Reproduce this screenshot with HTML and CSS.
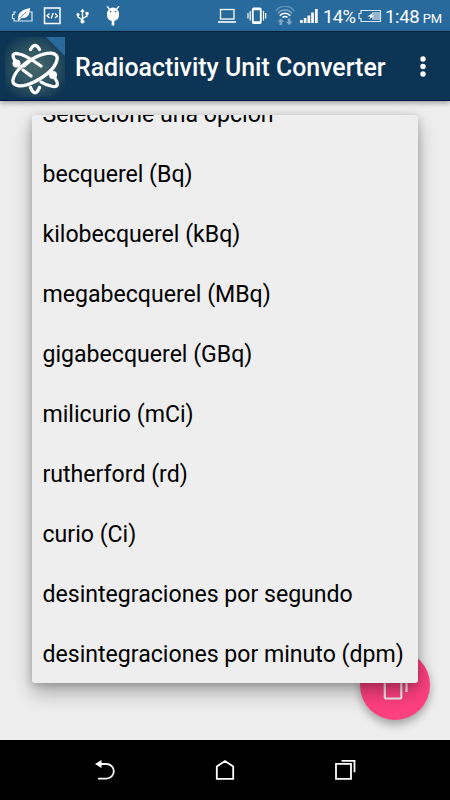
FILE: index.html
```html
<!DOCTYPE html>
<html lang="es">
<head>
    <meta charset="UTF-8">
    <title>Radioactivity Unit Converter</title>
    <link rel="stylesheet" href="styles.css">
</head>
<body>
    <div class="screen">
        <div class="status-bar">
            <div class="notifications">
                <svg width="22" height="20" viewBox="0 0 22 20">
                    <path d="M5 6H3v2.500H1.500v4H3v2.500h18V6H19" fill="none" stroke="#dbe7ef" stroke-width="1.2"/>
                    <path d="M7 13C7 6 11 4 19 2c0 6-2 10.500-8 10l-4 3z" fill="#fff"/>
                    <path d="M9 12l6-6" stroke="#286a9c" stroke-width=".7"/>
                </svg>
                <svg width="18" height="20" viewBox="0 0 18 20">
                    <rect x="1.500" y="2" width="15.500" height="15.500" fill="none" stroke="#fff" stroke-width="1.5"/>
                    <path d="M6.500 7.500L4 9.700 6.500 12M12 7.500l2.500 2.200L12 12M10.200 7l-2 5.500" fill="none" stroke="#fff" stroke-width="1.3"/>
                </svg>
                <svg width="14" height="20" viewBox="0 0 14 20">
                    <path d="M7.500 15V5M7.500 14L3 11V8.500M7.500 12.500L12 10V7.500" fill="none" stroke="#fff" stroke-width="1.4"/>
                    <path d="M5.200 6l2.300-3.500L9.800 6z" fill="#fff"/>
                    <circle cx="7.500" cy="15.500" r="2" fill="#fff"/>
                    <circle cx="3" cy="8.500" r="1.500" fill="#fff"/>
                    <path d="M10.500 6h3v3h-3z" fill="#fff"/>
                </svg>
                <svg width="15" height="22" viewBox="0 0 15 22">
                    <path d="M2 0l3 4M14 0l-3 4" stroke="#fff" stroke-width="1.3"/>
                    <path d="M2 8a6 6.500 0 0 1 12 0v1.500a6 5.500 0 0 1-12 0z" fill="#fff"/>
                    <path d="M8 14v5.500" stroke="#fff" stroke-width="2.600"/>
                    <circle cx="5.500" cy="5.500" r=".8" fill="#286a9c"/>
                    <circle cx="10.500" cy="5.500" r=".8" fill="#286a9c"/>
                </svg>
            </div>
            <div class="indicators">
                <svg class="laptop" width="18" height="20" viewBox="0 0 18 20">
                    <rect x="2.500" y="3.500" width="13.500" height="9.500" fill="none" stroke="#fff" stroke-width="1.300"/>
                    <path d="M0 16h18" stroke="#fff" stroke-width="1.600"/>
                </svg>
                <svg class="vibrate" width="20" height="20" viewBox="0 0 20 20">
                    <rect x="5.800" y="2.500" width="8" height="14.500" rx="1" fill="none" stroke="#fff" stroke-width="1.800"/>
                    <path d="M6 3.200h8M6 16.300h8" stroke="#fff" stroke-width="2"/>
                    <path d="M3.200 5v9.500M1 7v5.500M16.500 5v9.500M18.700 7v5.500" stroke="#fff" stroke-width="1.200"/>
                </svg>
                <svg class="wifi" width="20" height="20" viewBox="0 0 20 20">
                    <g fill="none" stroke-width="1.600">
                        <path d="M.8 5a11 10.500 0 0 1 18.400 0" stroke="#5f94b8"/>
                        <path d="M3 7.400a8.500 8 0 0 1 14 0" stroke="#80a9c6"/>
                        <path d="M4.800 9.700a6.600 6.300 0 0 1 10.400 0M7.500 11.500a3.300 3 0 0 1 5 0" stroke="#fff"/>
                    </g>
                    <path d="M5.800 12.500L2.500 15.800h2V19h2.600v-3.200h2zM14.200 19l-3.300-3.300h2v-3.200h2.600v3.200h2z" fill="#80a9c6"/>
                </svg>
                <svg class="signal" width="18" height="20" viewBox="0 0 18 20">
                    <path d="M0 14h2.700v3H0zM3.800 12h2.700v5H3.800zM7.500 9.500h2.700V17H7.500zM11.200 6.500h2.700V17h-2.700zM15 3h2.700v14H15z" fill="#fff"/>
                </svg>
                <span class="percent">14%</span>
                <svg class="battery" width="24" height="20" viewBox="0 0 24 20">
                    <path d="M14 6h8v8h-8z" fill="#94b5cd"/>
                    <path d="M3 4.500h19.500v11H3v-3H1v-5h2z" fill="none" stroke="#dbe7ef" stroke-width="1.200"/>
                    <path d="M15.500 6.500l-6 4h3L11 13.500l5.500-4h-3z" fill="#fff"/>
                </svg>
                <span class="clock">1:48 <small>PM</small></span>
            </div>
        </div>

        <div class="app-bar">
            <svg class="logo" width="60" height="60" viewBox="0 0 60 60">
                <defs>
                    <radialGradient id="glow" r=".62">
                        <stop offset="0" stop-color="#48666b"/>
                        <stop offset=".5" stop-color="#305663"/>
                        <stop offset="1" stop-color="#0e3352"/>
                    </radialGradient>
                </defs>
                <rect width="60" height="60" fill="url(#glow)"/>
                <path d="M41 0h19v19z" fill="#286a9c"/>
                <g fill="none" stroke="#fff" stroke-width="3.300" stroke-linecap="round">
                    <path d="M25.500 12.500c3-5.500 6-5.500 9 0M25.500 50.500c3 7 6 7 9 0"/>
                    <path d="M8.500 41C5 50 17 51 29 45 41 39 50 31 52 23 54 14 42 15 31 20 20 25 11 33 8.500 41z"/>
                    <path d="M12 26C6 19 7 15 14 17c5 1 10 4 13 6l9 6M26 23l-7 6M18 33l8 6M48 39c7 8 5 12-2 10-4-1-7-2-10-4"/>
                </g>
                <circle cx="11.500" cy="26.500" r="4" fill="#fff"/>
                <circle cx="48" cy="38" r="4" fill="#fff"/>
            </svg>
            <h1>Radioactivity Unit Converter</h1>
            <button class="overflow" aria-label="Menu">
                <svg width="8" height="22" viewBox="0 0 8 22">
                    <circle cx="4" cy="4" r="2.700" fill="#fff"/>
                    <circle cx="4" cy="11.500" r="2.700" fill="#fff"/>
                    <circle cx="4" cy="19" r="2.700" fill="#fff"/>
                </svg>
            </button>
        </div>

        <div class="content">
            <button class="fab" aria-label="Copiar">
                <svg width="30" height="34" viewBox="0 0 30 34">
                    <rect x="4.800" y="8" width="16.500" height="22.500" rx="1.500" fill="none" stroke="#eee" stroke-width="2.200"/>
                    <path d="M10 2h16.500v22" fill="none" stroke="#eee" stroke-width="2.200"/>
                </svg>
            </button>
            <ul class="dropdown">
                <li>Seleccione una opción</li>
                <li>becquerel (Bq)</li>
                <li>kilobecquerel (kBq)</li>
                <li>megabecquerel (MBq)</li>
                <li>gigabecquerel (GBq)</li>
                <li>milicurio (mCi)</li>
                <li>rutherford (rd)</li>
                <li>curio (Ci)</li>
                <li>desintegraciones por segundo</li>
                <li>desintegraciones por minuto (dpm)</li>
            </ul>
        </div>

        <div class="nav-bar">
            <svg width="24" height="24" viewBox="0 0 24 24">
                <path d="M6 6h7.500a7.300 7.300 0 0 1 0 14.600H5" fill="none" stroke="#fff" stroke-width="1.800"/>
                <path d="M2 6l6.500-4v8z" fill="#fff"/>
            </svg>
            <svg width="24" height="24" viewBox="0 0 24 24">
                <path d="M3.800 20.800V8.500L12 3l8.200 5.500v12.300z" fill="none" stroke="#fff" stroke-width="1.800"/>
            </svg>
            <svg width="24" height="24" viewBox="0 0 24 24">
                <path d="M3 5.800h15v15H3zM8.500 2.800h13v11.500" fill="none" stroke="#fff" stroke-width="1.800"/>
            </svg>
        </div>
    </div>
</body>
</html>
```
FILE: styles.css
```css
body {
    margin: 0;
    font-family: Roboto, sans-serif;
    background-color: #000;
}

.screen {
    display: flex;
    flex-direction: column;
    height: 800px;
    width: 450px;
    overflow: hidden;
}

svg {
    display: block;
    flex: none;
}

.status-bar {
    display: flex;
    justify-content: space-between;
    box-sizing: border-box;
    height: 31px;
    padding: 6px 9px 0 11px;
    background-color: #286a9c;
    color: white;
}

.notifications {
    display: flex;
    gap: 14px;
}

.notifications svg:first-child {
    margin-right: -4px;
}

.notifications svg:last-child {
    margin-left: 2px;
}

.indicators {
    display: flex;
    align-items: flex-start;
    white-space: nowrap;
}

.vibrate {
    margin-left: 11px;
}

.wifi {
    margin-left: 8px;
}

.signal {
    margin-left: 5px;
}

.percent {
    margin-left: 5px;
    width: 35px;
    font-size: 18.5px;
    line-height: 22px;
    letter-spacing: -0.6px;
}

.clock {
    margin-left: 3px;
    width: 56px;
    font-size: 18.5px;
    line-height: 22px;
    letter-spacing: -0.3px;
}

.clock small {
    font-size: 13px;
    margin-left: -1px;
}

.app-bar {
    display: flex;
    align-items: center;
    box-sizing: border-box;
    height: 70px;
    padding: 0 23px 0 5px;
    background-color: #0c3454;
    border-top: 1px solid #08243b;
    border-bottom: 1px solid #001148;
    box-shadow: 0 2px 5px rgba(0, 0, 0, 0.35);
    z-index: 1;
}

.logo {
    margin-top: 1px;
}

h1 {
    flex: 1;
    margin: 3px 0 0 10px;
    color: white;
    font-size: 24.9px;
    font-weight: 500;
    white-space: nowrap;
}

button {
    display: flex;
    align-items: center;
    justify-content: center;
    padding: 0;
    border: none;
    cursor: pointer;
}

.overflow {
    background: none;
}

.content {
    position: relative;
    flex: 1;
    background-color: #eee;
}

.dropdown {
    position: absolute;
    top: 14px;
    left: 32px;
    display: flex;
    flex-direction: column;
    justify-content: flex-end;
    box-sizing: border-box;
    width: 386px;
    height: 568px;
    margin: 0;
    padding: 0 10.5px;
    list-style: none;
    overflow: hidden;
    background-color: #eee;
    border-radius: 3px;
    box-shadow: 0 10px 20px rgba(0, 0, 0, 0.28), 0 2px 8px rgba(0, 0, 0, 0.2);
}

.dropdown li {
    flex: none;
    height: 60px;
    line-height: 64px;
    font-size: 23.1px;
    color: black;
    white-space: nowrap;
}

.fab {
    position: absolute;
    right: 20px;
    bottom: 20px;
    width: 70px;
    height: 70px;
    border-radius: 50%;
    background-color: #ff4081;
    box-shadow: 0 5px 9px rgba(0, 0, 0, 0.3);
}

.nav-bar {
    display: flex;
    align-items: center;
    justify-content: space-between;
    box-sizing: border-box;
    height: 60px;
    padding: 0 93px;
    background-color: black;
}
```
